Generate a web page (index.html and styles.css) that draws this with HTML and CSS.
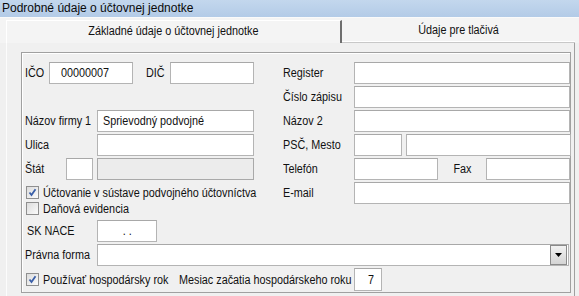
FILE: index.html
```html
<!DOCTYPE html>
<html lang="sk">
<head>
<meta charset="utf-8">
<link rel="stylesheet" href="styles.css">
</head>
<body>
<div class="window">
  <div class="titlebar">Podrobné údaje o účtovnej jednotke</div>
  <div class="tabs">
    <div class="tab active"><span class="t c">Základné údaje o účtovnej jednotke</span></div>
    <div class="tab"><span class="t c">Údaje pre tlačivá</span></div>
  </div>
  <div class="page">
    <div class="group">
      <div class="cols">
        <div class="col left">
          <div class="row">
            <span class="lbl w24"><span class="t">IČO</span></span>
            <div class="inp w84 pad"><span class="t">00000007</span></div>
            <span class="lbl w24 ml13"><span class="t">DIČ</span></span>
            <div class="inp w84"></div>
          </div>
          <div class="row"></div>
          <div class="row">
            <span class="lbl w72"><span class="t">Názov firmy 1</span></span>
            <div class="inp w157"><span class="t">Sprievodný podvojné</span></div>
          </div>
          <div class="row">
            <span class="lbl w72"><span class="t">Ulica</span></span>
            <div class="inp w157"></div>
          </div>
          <div class="row">
            <span class="lbl w41"><span class="t">Štát</span></span>
            <div class="inp w27"></div>
            <div class="inp w157 ml4 disabled"></div>
          </div>
          <div class="checks">
            <label class="chk"><span class="box"><svg viewBox="0 0 9 9" width="9" height="9"><path d="M1.5 4.5 L3.5 7 L7.5 1.2" fill="none" stroke="#3a5fa8" stroke-width="1.8"/></svg></span><span class="t">Účtovanie v sústave podvojného účtovníctva</span></label>
            <label class="chk"><span class="box"></span><span class="t">Daňová evidencia</span></label>
          </div>
          <div class="row nace">
            <span class="lbl w72 pl2"><span class="t">SK NACE</span></span>
            <div class="inp w60 center"><span class="t c">. .</span></div>
          </div>
        </div>
        <div class="col right">
          <div class="row"><span class="lbl w71"><span class="t">Register</span></span><div class="inp w216"></div></div>
          <div class="row"><span class="lbl w71"><span class="t">Číslo zápisu</span></span><div class="inp w216"></div></div>
          <div class="row"><span class="lbl w71"><span class="t">Názov 2</span></span><div class="inp w216"></div></div>
          <div class="row"><span class="lbl w71"><span class="t">PSČ, Mesto</span></span><div class="inp w48"></div><div class="inp w165 ml4"></div></div>
          <div class="row"><span class="lbl w71"><span class="t">Telefón</span></span><div class="inp w84"></div><span class="lbl w48 center"><span class="t c">Fax</span></span><div class="inp w84"></div></div>
          <div class="row"><span class="lbl w71"><span class="t">E-mail</span></span><div class="inp w216"></div></div>
        </div>
      </div>
      <div class="row forma">
        <span class="lbl w72"><span class="t">Právna forma</span></span>
        <div class="inp combo"><span class="dd"><svg viewBox="0 0 7 4" width="7" height="4"><path d="M0 0 H7 L3.5 4 Z" fill="#000"/></svg></span></div>
      </div>
      <div class="row last">
        <label class="chk w154"><span class="box"><svg viewBox="0 0 9 9" width="9" height="9"><path d="M1.5 4.5 L3.5 7 L7.5 1.2" fill="none" stroke="#3a5fa8" stroke-width="1.8"/></svg></span><span class="t">Používať hospodársky rok</span></label>
        <span class="lbl mesiac"><span class="t">Mesiac začatia hospodárskeho roku</span></span>
        <div class="inp w28 right-al"><span class="t r">7</span></div>
      </div>
    </div>
  </div>
</div>
</body>
</html>
```
FILE: styles.css
```css
* { box-sizing: border-box; }
html, body { margin: 0; padding: 0; }
body {
  width: 579px;
  height: 296px;
  overflow: hidden;
  background: #f0f0f0;
  font-family: "Liberation Sans", Arial, sans-serif;
  font-size: 12.5px;
  color: #111;
}
.t {
  display: inline-block;
  white-space: nowrap;
  transform: scaleX(0.865);
  transform-origin: left center;
}
.t.c { transform-origin: center center; }
.t.r { transform-origin: right center; }
.titlebar {
  height: 17px;
  background: linear-gradient(#c3d7ed, #b3cbe7);
  font-size: 12px;
  line-height: 17px;
  padding-left: 2px;
  color: #0a0a0a;
}
.tabs {
  display: flex;
  height: 26px;
  padding: 2px 4px 0 6px;
  background: #f4f4f4;
  border-top: 1px solid #fafafa;
}
.tab {
  display: flex;
  align-items: center;
  justify-content: center;
  padding-bottom: 2px;
}
.tab.active {
  width: 336px;
  border-left: 1px solid #fff;
  border-top: 1px solid #fff;
  border-right: 2px solid #6e6e6e;
}
.tab:not(.active) {
  flex: 1;
  border-bottom: 1px solid #c8c8c8;
  box-shadow: inset 0 -1px 0 #fff;
}
.page {
  height: 253px;
  margin-left: 6px;
  margin-right: 4px;
  border-left: 1px solid #fcfcfc;
  border-right: 1px solid #a0a0a0;
  padding: 9px 3px 0 14px;
}
.group {
  width: 550px;
  height: 241px;
  border: 1px solid #a0a0a0;
  box-shadow: inset 1px 1px 0 #fff;
  padding: 9px 0 0 3px;
}
.cols { display: flex; }
.col { display: flex; flex-direction: column; gap: 2px; }
.left { width: 258px; }
.row {
  display: flex;
  align-items: center;
  height: 22px;
}
.lbl { flex: none; white-space: nowrap; }
.inp {
  flex: none;
  height: 22px;
  background: #fff;
  border: 1px solid #b4b4b4;
  border-top-color: #a8a8a8;
  display: flex;
  align-items: center;
  padding-left: 5px;
  white-space: nowrap;
}
.inp.pad { padding-left: 11px; }
.inp.center { justify-content: center; padding-left: 0; }
.inp.right-al { justify-content: flex-end; padding-right: 7px; }
.inp.disabled { background: #ececec; border-color: #a9a9a9; }
.w24 { width: 24px; }
.w27 { width: 27px; }
.w28 { width: 28px; }
.w41 { width: 41px; }
.w48 { width: 48px; }
.w60 { width: 60px; }
.w71 { width: 71px; }
.w72 { width: 72px; }
.w84 { width: 84px; }
.w154 { width: 154px; }
.w157 { width: 157px; }
.w165 { width: 165px; }
.w216 { width: 216px; }
.ml13 { margin-left: 13px; }
.ml4 { margin-left: 4px; }
.pl2 { padding-left: 2px; }
.lbl.center { display: flex; justify-content: center; }
.checks {
  display: flex;
  flex-direction: column;
  padding-top: 4px;
  gap: 3px;
}
.chk {
  display: flex;
  align-items: center;
  height: 13px;
  padding-left: 1px;
  white-space: nowrap;
  flex: none;
}
.box {
  flex: none;
  width: 13px;
  height: 13px;
  margin-right: 4px;
  border: 1px solid #8f8f8f;
  background: linear-gradient(135deg, #dcdcdc, #fbfbfb);
  display: flex;
  align-items: center;
  justify-content: center;
}
.nace { margin-top: 3px; }
.forma { margin-top: 2px; }
.combo {
  width: 472px;
  justify-content: flex-end;
  padding: 0 1px 0 0;
}
.dd {
  width: 17px;
  height: 20px;
  border: 1px solid #8a8a8a;
  background: linear-gradient(#f2f2f2, #d4d4d4);
  display: flex;
  align-items: center;
  justify-content: center;
}
.last { margin-top: 2px; height: 23px; }
.last .inp { height: 23px; }
.mesiac { width: 175px; }
```
